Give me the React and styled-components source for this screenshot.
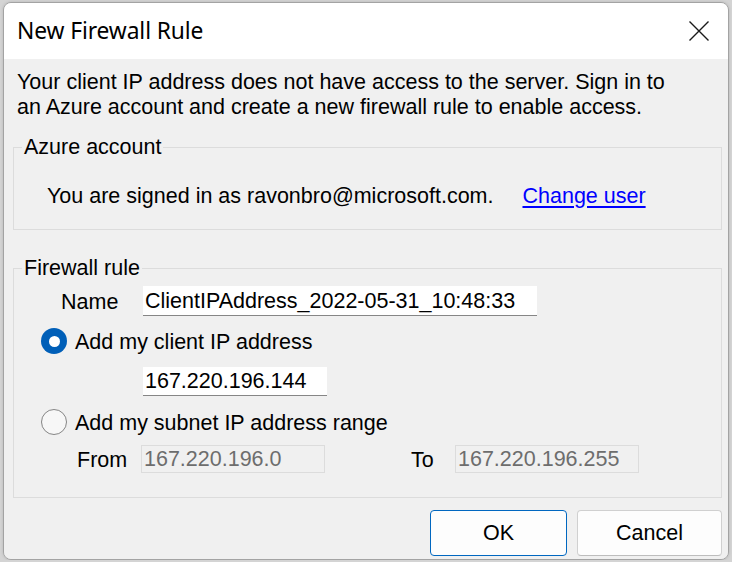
import React from "react";
import styled, { createGlobalStyle } from "styled-components";

const Global = createGlobalStyle`
  html, body {
    margin: 0;
    background: #d4d4d4;
  }
  body {
    font-family: "Liberation Sans", Arial, sans-serif;
    font-size: 21.5px;
    color: #000;
  }
`;

function App() {
  return (
    <>
      <Global />
      <Window>
        <TitleBar>
          <div className="title">New Firewall Rule</div>
          <CloseButton aria-label="Close">
            <svg width="20" height="20" viewBox="0 0 20 20">
              <path d="M0.5 0.5 L19.5 19.5 M19.5 0.5 L0.5 19.5" stroke="#1a1a1a" strokeWidth="1.4" fill="none" />
            </svg>
          </CloseButton>
        </TitleBar>
        <Body>
          <Intro>
            Your client IP address does not have access to the server. Sign in to
            <br />
            an Azure account and create a new firewall rule to enable access.
          </Intro>

          <Group>
            <legend>Azure account</legend>
            <AccountRow>
              <span>You are signed in as ravonbro@microsoft.com.</span>
              <a href="#change">Change user</a>
            </AccountRow>
          </Group>

          <Group $spaced>
            <legend>Firewall rule</legend>
            <Row $height={30} $indent={47}>
              <Label $width={82}>Name</Label>
              <TextInput $width={394} defaultValue="ClientIPAddress_2022-05-31_10:48:33" />
            </Row>
            <Row $height={26} $indent={27} $gap={12}>
              <Radio $checked />
              <Label>Add my client IP address</Label>
            </Row>
            <Row $height={29} $indent={129} $gap={13}>
              <TextInput $width={184} defaultValue="167.220.196.144" />
            </Row>
            <Row $height={26} $indent={27} $gap={13}>
              <Radio />
              <Label>Add my subnet IP address range</Label>
            </Row>
            <Row $height={28} $indent={63} $gap={10}>
              <Label $width={64}>From</Label>
              <TextInput $width={184} $disabled disabled defaultValue="167.220.196.0" />
              <Label $width={44} style={{ marginLeft: 86 }}>To</Label>
              <TextInput $width={184} $disabled disabled defaultValue="167.220.196.255" />
            </Row>
          </Group>

          <Buttons>
            <Button $primary $width={137}>OK</Button>
            <Button $width={145}>Cancel</Button>
          </Buttons>
        </Body>
      </Window>
    </>
  );
}

export default App;

const Window = styled.div`
  margin: 2px 0 0 3px;
  width: 724px;
  height: 556px;
  border: 1px solid #a3a3a3;
  border-radius: 8px;
  overflow: hidden;
  display: flex;
  flex-direction: column;
  box-shadow: 0 0 3px rgba(0, 0, 0, 0.15);
`;

const TitleBar = styled.div`
  height: 56px;
  flex: none;
  background: #fff;
  display: flex;
  align-items: center;
  justify-content: space-between;
  padding: 0 19px 0 13px;

  .title {
    font-family: "Noto Sans", "Open Sans", sans-serif;
    font-size: 22.8px;
    letter-spacing: -0.1px;
    margin-top: -1px;
  }
`;

const CloseButton = styled.div`
  width: 20px;
  height: 20px;
  display: flex;
  svg {
    display: block;
  }
`;

const Body = styled.div`
  flex: 1;
  background: #f0f0f0;
  padding: 11px 6px 0 9px;
  display: flex;
  flex-direction: column;
`;

const Intro = styled.p`
  margin: 0 0 0 4px;
  line-height: 25px;
`;

const Group = styled.fieldset`
  margin: ${(p) => (p.$spaced ? "26px" : "15px")} 0 0 0;
  padding: 0;
  border: 1px solid #dcdcdc;
  min-width: 0;

  legend {
    margin-left: 8px;
    padding: 0 2px;
    line-height: 25px;
  }

  &:last-of-type {
    padding-bottom: 24px;
  }
`;

const AccountRow = styled.div`
  display: flex;
  align-items: center;
  height: 25px;
  padding: 24px 0 20px 33px;

  a {
    margin-left: 29px;
    color: #0000ff;
    text-decoration: underline;
    text-underline-offset: 3px;
  }
`;

const Row = styled.div`
  display: flex;
  align-items: center;
  height: ${(p) => p.$height}px;
  margin-top: ${(p) => p.$gap || 5}px;
  padding-left: ${(p) => p.$indent}px;
`;

const Label = styled.span`
  width: ${(p) => (p.$width ? `${p.$width}px` : "auto")};
  flex: none;
  padding-top: 3px;
`;

const TextInput = styled.input`
  box-sizing: border-box;
  width: ${(p) => p.$width}px;
  height: 100%;
  font: inherit;
  margin: 0;
  padding: 1px 0 0 2px;
  outline: none;
  background: ${(p) => (p.$disabled ? "#f0f0f0" : "#fff")};
  color: ${(p) => (p.$disabled ? "#6d6d6d" : "#000")};
  border: ${(p) => (p.$disabled ? "1px solid #dcdcdc" : "none")};
  border-bottom: 1px solid ${(p) => (p.$disabled ? "#dcdcdc" : "#868686")};
`;

const Radio = styled.span`
  box-sizing: border-box;
  width: 26px;
  height: 26px;
  border-radius: 50%;
  margin-right: 8px;
  flex: none;
  display: flex;
  align-items: center;
  justify-content: center;
  background: ${(p) => (p.$checked ? "#005fb8" : "#f7f7f7")};
  border: ${(p) => (p.$checked ? "none" : "1.5px solid #858585")};

  &::after {
    content: "";
    display: ${(p) => (p.$checked ? "block" : "none")};
    width: 11px;
    height: 11px;
    border-radius: 50%;
    background: #fff;
  }
`;

const Buttons = styled.div`
  display: flex;
  justify-content: flex-end;
  gap: 10px;
  margin-top: 12px;
`;

const Button = styled.button`
  box-sizing: border-box;
  width: ${(p) => p.$width}px;
  height: 46px;
  font: inherit;
  color: #000;
  background: #fdfdfd;
  border: 1px solid ${(p) => (p.$primary ? "#0067c0" : "#d0d0d0")};
  border-bottom-color: ${(p) => (p.$primary ? "#0067c0" : "#bdbdbd")};
  border-radius: 4px;
  padding: 0;
`;
